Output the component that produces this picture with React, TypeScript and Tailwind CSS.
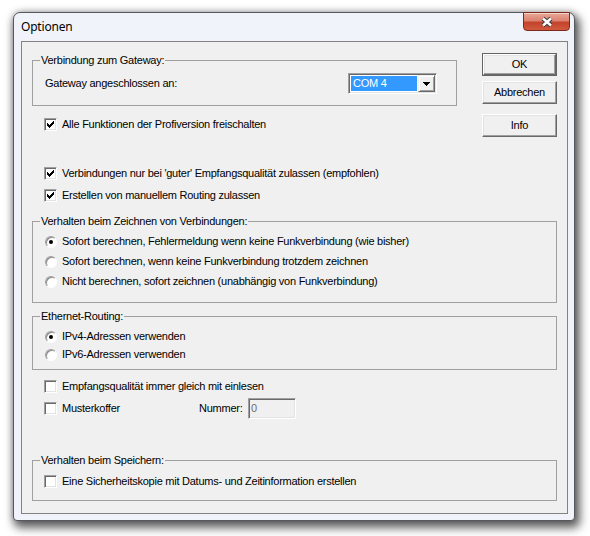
import React from "react";
import clsx from "clsx";

// classic 7x7 check mark, one column of 3px per x
const CHECK_COLS = [2, 3, 4, 3, 2, 1, 0];

const CheckBox = ({ checked }: { checked?: boolean }) => (
    <span className="flex h-[13px] w-[13px] shrink-0 items-center justify-center border border-t-[#a0a0a0] border-l-[#a0a0a0] border-b-white border-r-white bg-white shadow-[inset_1px_1px_0_#696969,inset_-1px_-1px_0_#e3e3e3]">
        {checked && (
            <svg width="7" height="7" viewBox="0 0 7 7" shapeRendering="crispEdges">
                {CHECK_COLS.map((y, x) => (
                    <rect key={x} x={x} y={y} width="1" height="3" fill="#000" />
                ))}
            </svg>
        )}
    </span>
);

const Radio = ({ checked }: { checked?: boolean }) => (
    <span className="ml-[1px] flex h-[12px] w-[12px] shrink-0 items-center justify-center rounded-full border border-t-[#a0a0a0] border-l-[#a0a0a0] border-b-white border-r-white bg-white shadow-[inset_1px_1px_0_#8a8a8a]">
        {checked && <span className="h-[4px] w-[4px] rounded-full bg-black" />}
    </span>
);

const Option = ({
    control,
    children,
    className,
}: {
    control: React.ReactNode;
    children: React.ReactNode;
    className?: string;
}) => (
    <div className={clsx("flex h-[13px] items-center", className)}>
        {control}
        <span className="ml-[5px] whitespace-nowrap leading-[13px]">{children}</span>
    </div>
);

const Group = ({
    title,
    className,
    children,
}: {
    title: string;
    className?: string;
    children: React.ReactNode;
}) => (
    <fieldset className={clsx("border border-[#a0a0a0] px-[7px]", className)}>
        <legend className="px-[1px] leading-[13px]">{title}</legend>
        {children}
    </fieldset>
);

const Button = ({ label, isDefault }: { label: string; isDefault?: boolean }) => (
    <div
        className={clsx(
            "h-[23px] w-[75px]",
            isDefault ? "border border-[#646464]" : ""
        )}
    >
        <div className="flex h-full w-full items-center justify-center border border-t-white border-l-white border-b-[#696969] border-r-[#696969] bg-[#f0f0f0] shadow-[inset_-1px_-1px_0_#a0a0a0,inset_1px_1px_0_#e3e3e3]">
            {label}
        </div>
    </div>
);

const ComboBox = () => (
    <div className="flex h-[21px] w-[89px] border border-t-[#a0a0a0] border-l-[#a0a0a0] border-b-white border-r-white bg-white p-[1px] shadow-[inset_1px_1px_0_#696969,inset_-1px_-1px_0_#e3e3e3]">
        <div className="m-[1px] flex flex-1 items-center bg-[#3399ff] pl-[2px] leading-[13px] text-white">
            COM 4
        </div>
        <div className="flex w-[17px] items-center justify-center border border-t-[#f0f0f0] border-l-[#f0f0f0] border-b-[#696969] border-r-[#696969] bg-[#f0f0f0] shadow-[inset_1px_1px_0_#fff,inset_-1px_-1px_0_#a0a0a0]">
            <svg width="7" height="4" viewBox="0 0 7 4" shapeRendering="crispEdges">
                <path d="M0 0h7v1H0zM1 1h5v1H1zM2 2h3v1H2zM3 3h1v1H3z" fill="#000" />
            </svg>
        </div>
    </div>
);

const CloseButton = () => (
    <div className="-mt-[1px] mr-[4px] ml-auto flex h-[19px] w-[47px] items-center justify-center rounded-b-[4px] border border-[#7d2a1d] bg-[linear-gradient(#e9a898,#db8270_45%,#c4432d_55%,#cf5a40)] shadow-[inset_0_1px_0_rgba(255,255,255,0.5)]">
        <svg width="14" height="12" viewBox="0 0 14 12">
            <path d="M3 2.5L11 9.5M11 2.5L3 9.5" stroke="#3a3a3a" strokeWidth="4.4" />
            <path d="M3 2.5L11 9.5M11 2.5L3 9.5" stroke="#fff" strokeWidth="2.4" />
        </svg>
    </div>
);

export default function App() {
    return (
        <div className="h-[536px] w-[590px] bg-white pt-[12px] pl-[13px] font-['Liberation_Sans',Arial,sans-serif] text-[11px] tracking-[-0.25px] text-black">
            <div className="h-[509px] w-[562px] rounded-t-[7px] rounded-b-[4px] border border-[#55595e] bg-[#f0f4fa] shadow-[3px_5px_10px_2px_rgba(0,0,0,0.6),0_0_7px_rgba(0,0,0,0.25)]">
                <div className="flex h-[28px]">
                    <span className="mt-[6px] ml-[7px] font-['Noto_Sans',sans-serif] text-[12px] leading-[16px] tracking-[-0.2px]">
                        Optionen
                    </span>
                    <CloseButton />
                </div>

                <div className="ml-[7px] h-[473px] w-[547px] border border-[#828282] bg-[#f0f0f0] px-[10px] pt-[11px]">
                    <div className="flex justify-between">
                        <div className="mt-[1px] w-[425px]">
                            <Group title="Verbindung zum Gateway:" className="pt-[6px] pb-[11px]">
                                <div className="flex items-center justify-between pr-[12px] pl-[5px]">
                                    <span className="leading-[13px]">Gateway angeschlossen an:</span>
                                    <ComboBox />
                                </div>
                            </Group>
                            <Option className="mt-[12px] ml-[12px]" control={<CheckBox checked />}>
                                Alle Funktionen der Profiversion freischalten
                            </Option>
                        </div>
                        <div className="flex flex-col">
                            <Button label="OK" isDefault />
                            <div className="mt-[5px]">
                                <Button label="Abbrechen" />
                            </div>
                            <div className="mt-[10px]">
                                <Button label="Info" />
                            </div>
                        </div>
                    </div>

                    <Option className="mt-[30px] ml-[12px]" control={<CheckBox checked />}>
                        Verbindungen nur bei 'guter' Empfangsqualität zulassen (empfohlen)
                    </Option>
                    <Option className="mt-[9px] ml-[12px]" control={<CheckBox checked />}>
                        Erstellen von manuellem Routing zulassen
                    </Option>

                    <Group title="Verhalten beim Zeichnen von Verbindungen:" className="mt-[13px] pt-[7px] pb-[14px]">
                        <div className="ml-[4px] flex flex-col gap-[7px]">
                            <Option control={<Radio checked />}>
                                Sofort berechnen, Fehlermeldung wenn keine Funkverbindung (wie bisher)
                            </Option>
                            <Option control={<Radio />}>
                                Sofort berechnen, wenn keine Funkverbindung trotzdem zeichnen
                            </Option>
                            <Option control={<Radio />}>
                                Nicht berechnen, sofort zeichnen (unabhängig von Funkverbindung)
                            </Option>
                        </div>
                    </Group>

                    <Group title="Ethernet-Routing:" className="mt-[7px] pt-[7px] pb-[8px]">
                        <div className="ml-[4px] flex flex-col gap-[5px]">
                            <Option control={<Radio checked />}>IPv4-Adressen verwenden</Option>
                            <Option control={<Radio />}>IPv6-Adressen verwenden</Option>
                        </div>
                    </Group>

                    <Option className="mt-[10px] ml-[12px]" control={<CheckBox />}>
                        Empfangsqualität immer gleich mit einlesen
                    </Option>
                    <div className="mt-[5px] ml-[12px] flex h-[21px] items-center">
                        <Option className="w-[155px]" control={<CheckBox />}>
                            Musterkoffer
                        </Option>
                        <span className="leading-[13px]">Nummer:</span>
                        <div className="ml-auto mr-[261px] flex h-[21px] w-[48px] items-center border border-t-[#a0a0a0] border-l-[#a0a0a0] border-b-white border-r-white bg-[#f0f0f0] pl-[2px] text-[#6d6d6d] shadow-[inset_1px_1px_0_#696969,inset_-1px_-1px_0_#e3e3e3]">
                            0
                        </div>
                    </div>

                    <Group title="Verhalten beim Speichern:" className="mt-[35px] pt-[8px] pb-[12px]">
                        <Option className="ml-[4px]" control={<CheckBox />}>
                            Eine Sicherheitskopie mit Datums- und Zeitinformation erstellen
                        </Option>
                    </Group>
                </div>
            </div>
        </div>
    );
}
